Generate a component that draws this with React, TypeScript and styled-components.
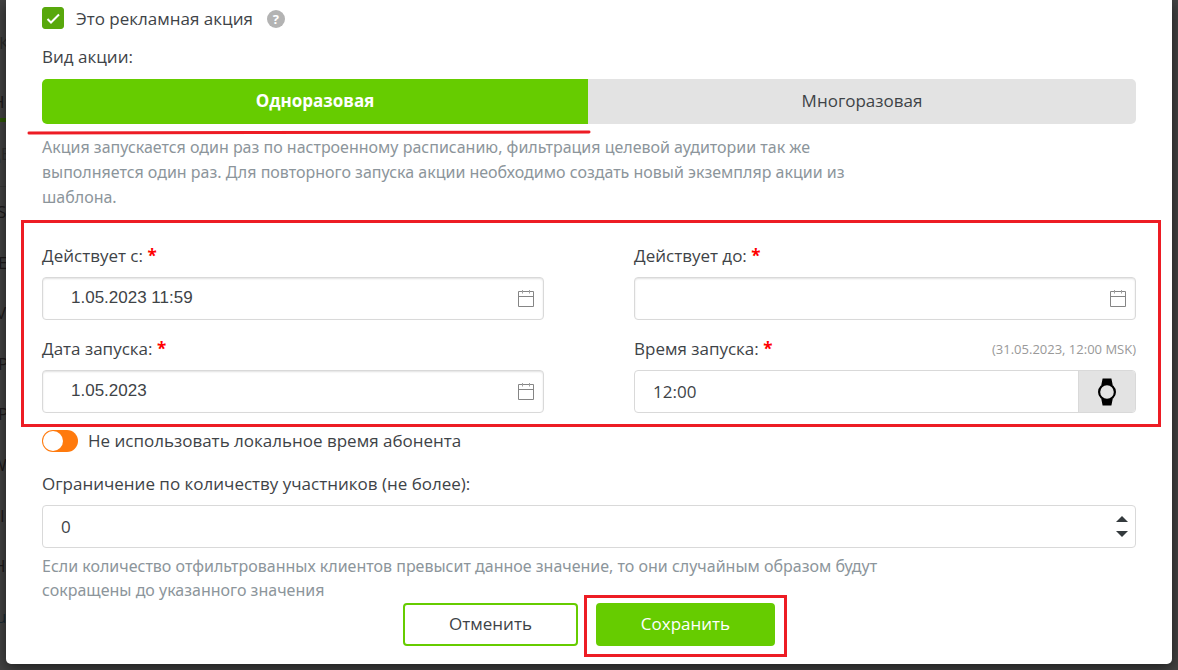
import React, { useState } from 'react';
import styled, { createGlobalStyle, css } from 'styled-components';

const GlobalStyle = createGlobalStyle`
  *, *::before, *::after { box-sizing: border-box; }
  body {
    margin: 0;
    background: #434343;
    color: #3e4347;
    font-family: 'Open Sans', 'Noto Sans', sans-serif;
    font-size: 17px;
    line-height: 24px;
  }
  button, input { font: inherit; color: inherit; margin: 0; }
`;

const Page = styled.div`
  position: relative;
  min-height: 100vh;
  padding: 0 6px;
  overflow: hidden;
`;

const Behind = styled.div`
  position: absolute;
  inset: 0;
  display: flex;
  flex-direction: column;
  overflow: hidden;
`;

const BehindRow = styled.div<{ $h: number; $shift?: number; $tone?: string; $line?: string }>`
  width: 50%;
  height: ${(p) => p.$h}px;
  flex: none;
  display: flex;
  align-items: center;
  text-indent: ${(p) => p.$shift ?? -5}px;
  color: ${(p) => p.$tone ?? '#1e1a1b'};
  border-bottom: ${(p) => p.$line ?? '0'};
`;

const BehindHeading = styled(BehindRow)`
  font-size: 14px;
  font-weight: 600;
`;

const Dialog = styled.main`
  position: relative;
  background: #fff;
  border-radius: 0 0 5px 5px;
  box-shadow: 0 4px 14px rgba(0, 0, 0, 0.55);
  padding: 6px 36px 18px;
`;

const CheckRow = styled.div`
  display: flex;
  align-items: center;
  height: 26px;
  margin-bottom: 13px;
`;

const CheckLabel = styled.label`
  display: flex;
  align-items: center;
  gap: 12px;
`;

const CheckBox = styled.span`
  display: grid;
  width: 22px;
  height: 22px;
  margin-bottom: 2px;
  > * { grid-area: 1 / 1; }
  input {
    appearance: none;
    width: 22px;
    height: 22px;
    border-radius: 3px;
    border: 1px solid #58a80c;
    background: #fff;
  }
  input:checked { background: #58a80c; }
  svg { pointer-events: none; z-index: 1; }
`;

const HelpButton = styled.button`
  width: 18px;
  height: 18px;
  margin-left: 14px;
  padding: 0;
  border: 0;
  border-radius: 50%;
  background: #b3b3b3;
  color: #fff;
  font-size: 13px;
  font-weight: 700;
  line-height: 18px;
`;

const SegmentGroup = styled.div`
  position: relative;
  display: flex;
  margin-top: 10px;
  margin-bottom: 11px;
`;

const Segment = styled.button<{ $active: boolean }>`
  flex: 1 1 auto;
  height: 45px;
  border: 0;
  padding: 0 0 2px;
  background: #e3e3e3;
  &:first-child { border-radius: 5px 0 0 5px; }
  &:nth-child(2) { border-radius: 0 5px 5px 0; }
  ${(p) =>
    p.$active &&
    css`
      background: #66cc00;
      color: #fff;
      font-weight: 700;
    `}
`;

const MarkerLine = styled.svg`
  position: absolute;
  left: -15px;
  top: 50px;
  width: calc(50% + 17px);
  height: 6px;
`;

const Hint = styled.p`
  max-width: 850px;
  margin: 0;
  color: #8c959b;
  font-family: 'Noto Sans', 'Open Sans', sans-serif;
  font-size: 16px;
  line-height: 25px;
`;

const CompactHint = styled(Hint)`
  line-height: 24px;
  margin-top: 6px;
`;

const MarkedArea = styled.div`
  position: relative;
  margin-top: 10px;
  padding: 24px 0 17px;
  &::after {
    content: '';
    position: absolute;
    inset: 0 -25px 3px -21px;
    border: 3px solid #ed1c24;
    pointer-events: none;
  }
`;

const FieldGrid = styled.div`
  display: grid;
  grid-template-columns: 1fr 1fr;
  column-gap: 90px;
  row-gap: 17px;
`;

const Field = styled.div`
  display: flex;
  flex-direction: column;
  gap: 9px;
`;

const LabelRow = styled.div`
  display: flex;
  justify-content: space-between;
`;

const Required = styled.span`
  color: #ff0000;
  font-weight: 700;
`;

const Zone = styled.span`
  color: #999;
  font-size: 13px;
`;

const Control = styled.div<{ $inset?: boolean }>`
  display: flex;
  align-items: stretch;
  height: 43px;
  border: 1px solid #d9d9d9;
  border-radius: 4px;
  background: #fff;
  overflow: hidden;
  box-shadow: ${(p) => (p.$inset ? 'inset 0 1px 2px rgba(0, 0, 0, 0.12)' : 'none')};
`;

const TextInput = styled.input<{ $date?: boolean }>`
  flex: 1;
  min-width: 0;
  border: 0;
  outline: 0;
  background: transparent;
  padding: ${(p) => (p.$date ? '0 0 1px 28px' : '0 0 0 18px')};
  font-family: ${(p) => (p.$date ? "'Liberation Sans', Arial, sans-serif" : 'inherit')};
  appearance: textfield;
  &::-webkit-inner-spin-button { appearance: none; margin: 0; }
`;

const IconButton = styled.button`
  border: 0;
  padding: 0 8px;
  background: transparent;
  display: flex;
  align-items: center;
`;

const WatchButton = styled(IconButton)`
  width: 57px;
  padding: 0;
  justify-content: center;
  background: #e3e3e3;
  border-left: 1px solid #d9d9d9;
`;

const Stepper = styled.div`
  display: flex;
  flex-direction: column;
  justify-content: center;
  padding-right: 7px;
`;

const StepButton = styled.button`
  display: flex;
  align-items: center;
  justify-content: center;
  width: 12px;
  height: 15px;
  padding: 0;
  border: 0;
  background: none;
`;

const SwitchLabel = styled.label`
  display: flex;
  align-items: center;
  gap: 10px;
  height: 22px;
  margin-bottom: 20px;
  input {
    appearance: none;
    width: 36px;
    height: 22px;
    border-radius: 11px;
    background: #ff7a0d;
    display: flex;
    align-items: center;
    padding: 1px;
  }
  input::before {
    content: '';
    width: 20px;
    height: 20px;
    border-radius: 50%;
    background: #fff;
  }
  input:checked { justify-content: flex-end; background: #66cc00; }
`;

const Actions = styled.div`
  display: flex;
  justify-content: center;
  gap: 18px;
  margin-top: 1px;
`;

const ActionButton = styled.button<{ $primary?: boolean }>`
  width: ${(p) => (p.$primary ? 179 : 175)}px;
  height: 43px;
  padding: 0 0 2px;
  border: 2px solid #66cc00;
  border-radius: 4px;
  background: ${(p) => (p.$primary ? '#66cc00' : '#fff')};
  color: ${(p) => (p.$primary ? '#fff' : 'inherit')};
`;

const MarkedAction = styled.div`
  position: relative;
  &::after {
    content: '';
    position: absolute;
    inset: -8px -12px -11px;
    border: 3px solid #ed1c24;
    pointer-events: none;
  }
`;

const CalendarIcon = () => (
  <svg width="18" height="18" viewBox="0 0 18 18" fill="none" stroke="#858585" aria-hidden="true">
    <path d="M1.5 1.5h15v15h-15zM1 6.5h16" />
    <path d="M5.500 0v3.500M12.500 0v3.500" stroke="#a0a0a0" />
  </svg>
);

const WatchIcon = () => (
  <svg width="18" height="28" viewBox="0 0 18 28" aria-hidden="true">
    <path d="M4.600 0.500h8.800l1.300 6.500H3.300zM3.300 21h11.400l-1.300 6.500H4.600z" fill="#000" />
    <circle cx="9" cy="14" r="7.900" fill="#e3e3e3" stroke="#000" strokeWidth="2.200" />
  </svg>
);

interface DateFieldProps {
  id: string;
  label: string;
  value: string;
}

const DateField = ({ id, label, value }: DateFieldProps) => (
  <Field>
    <LabelRow>
      <label htmlFor={id}>
        {label} <Required>*</Required>
      </label>
    </LabelRow>
    <Control $inset>
      <TextInput id={id} type="text" defaultValue={value} $date />
      <IconButton type="button" aria-label="Календарь">
        <CalendarIcon />
      </IconButton>
    </Control>
  </Field>
);

export default function App() {
  const [once, setOnce] = useState(true);
  const [limit, setLimit] = useState(0);

  return (
    <>
      <GlobalStyle />
      <Page>
        <Behind aria-hidden="true">
          <BehindRow $h={86} $shift={-1} $tone="#2b2b2b">К</BehindRow>
          <BehindRow $h={36} $shift={-8} $line="4px solid #2c5606">Н</BehindRow>
          <BehindRow $h={65} $shift={-11} $tone="#303030" $line="1px solid #393939">ДЕ</BehindRow>
          <BehindRow $h={50} $shift={-3}>S</BehindRow>
          <BehindRow $h={51} $shift={-2}>E</BehindRow>
          <BehindRow $h={50} $shift={-4}>V</BehindRow>
          <BehindRow $h={51} $shift={-2}>P</BehindRow>
          <BehindRow $h={50} $shift={-2}>P</BehindRow>
          <BehindRow $h={51} $shift={-9}>W</BehindRow>
          <BehindRow $h={51} $shift={0}>I</BehindRow>
          <BehindRow $h={50} $shift={-7}>H</BehindRow>
          <BehindRow $h={51} $shift={-4} $tone="#1a2a33">u</BehindRow>
          <BehindHeading $h={66} $shift={2} $tone="#2b2b2b">СОБЫТИЯ</BehindHeading>
        </Behind>

        <Dialog>
          <CheckRow>
            <CheckLabel>
              <CheckBox>
                <input type="checkbox" defaultChecked />
                <svg width="22" height="22" viewBox="0 0 22 22" fill="none" stroke="#fff" strokeWidth="2" aria-hidden="true">
                  <path d="M5.500 12l3.500 3.500 8-8" />
                </svg>
              </CheckBox>
              Это рекламная акция
            </CheckLabel>
            <HelpButton type="button" aria-label="Справка">?</HelpButton>
          </CheckRow>

          <div id="kind">Вид акции:</div>
          <SegmentGroup role="group" aria-labelledby="kind">
            <Segment type="button" $active={once} onClick={() => setOnce(true)}>
              Одноразовая
            </Segment>
            <Segment type="button" $active={!once} onClick={() => setOnce(false)}>
              Многоразовая
            </Segment>
            <MarkerLine viewBox="0 0 564 6" preserveAspectRatio="none" aria-hidden="true">
              <path d="M2 4L562 3" stroke="#ed1c24" strokeWidth="3" strokeLinecap="round" />
            </MarkerLine>
          </SegmentGroup>
          <Hint>
            Акция запускается один раз по настроенному расписанию, фильтрация целевой аудитории так же
            выполняется один раз. Для повторного запуска акции необходимо создать новый экземпляр акции из
            шаблона.
          </Hint>

          <MarkedArea>
            <FieldGrid>
              <DateField id="from" label="Действует с:" value="1.05.2023 11:59" />
              <DateField id="to" label="Действует до:" value="" />
              <DateField id="start" label="Дата запуска:" value="1.05.2023" />
              <Field>
                <LabelRow>
                  <label htmlFor="time">
                    Время запуска: <Required>*</Required>
                  </label>
                  <Zone>(31.05.2023, 12:00 MSK)</Zone>
                </LabelRow>
                <Control>
                  <TextInput id="time" type="text" defaultValue="12:00" />
                  <WatchButton type="button" aria-label="Выбрать время">
                    <WatchIcon />
                  </WatchButton>
                </Control>
              </Field>
            </FieldGrid>
          </MarkedArea>

          <SwitchLabel>
            <input type="checkbox" role="switch" />
            Не использовать локальное время абонента
          </SwitchLabel>

          <Field>
            <label htmlFor="limit">Ограничение по количеству участников (не более):</label>
            <Control>
              <TextInput
                id="limit"
                type="number"
                min={0}
                value={limit}
                onChange={(e) => setLimit(Number(e.target.value))}
              />
              <Stepper>
                <StepButton type="button" aria-label="Увеличить" onClick={() => setLimit(limit + 1)}>
                  <svg width="12" height="6" viewBox="0 0 12 6" aria-hidden="true">
                    <path d="M0 6L6 0l6 6z" fill="#343a3d" />
                  </svg>
                </StepButton>
                <StepButton type="button" aria-label="Уменьшить" onClick={() => setLimit(Math.max(0, limit - 1))}>
                  <svg width="12" height="6" viewBox="0 0 12 6" aria-hidden="true">
                    <path d="M0 0h12L6 6z" fill="#343a3d" />
                  </svg>
                </StepButton>
              </Stepper>
            </Control>
          </Field>
          <CompactHint>
            Если количество отфильтрованных клиентов превысит данное значение, то они случайным образом будут
            сокращены до указанного значения
          </CompactHint>

          <Actions>
            <ActionButton type="button">Отменить</ActionButton>
            <MarkedAction>
              <ActionButton type="button" $primary>
                Сохранить
              </ActionButton>
            </MarkedAction>
          </Actions>
        </Dialog>
      </Page>
    </>
  );
}
